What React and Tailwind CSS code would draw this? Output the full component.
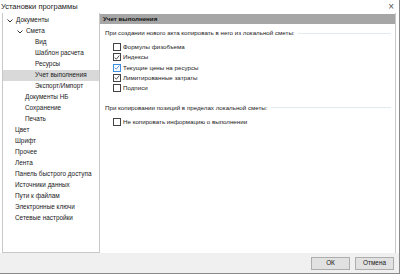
import React from 'react';

const tree = [
  { label: 'Документы', level: 0, chevron: true },
  { label: 'Смета', level: 1, chevron: true },
  { label: 'Вид', level: 2 },
  { label: 'Шаблон расчета', level: 2 },
  { label: 'Ресурсы', level: 2 },
  { label: 'Учет выполнения', level: 2, selected: true },
  { label: 'Экспорт/Импорт', level: 2 },
  { label: 'Документы НБ', level: 1 },
  { label: 'Сохранение', level: 1 },
  { label: 'Печать', level: 1 },
  { label: 'Цвет', level: 0 },
  { label: 'Шрифт', level: 0 },
  { label: 'Прочее', level: 0 },
  { label: 'Лента', level: 0 },
  { label: 'Панель быстрого доступа', level: 0 },
  { label: 'Источники данных', level: 0 },
  { label: 'Пути к файлам', level: 0 },
  { label: 'Электронные ключи', level: 0 },
  { label: 'Сетевые настройки', level: 0 },
];

const padFor = (it) => {
  if (it.chevron) return it.level === 0 ? 'pl-[4px]' : 'pl-[14px]';
  if (it.level === 0) return 'pl-[12px]';
  if (it.level === 1) return 'pl-[22px]';
  return 'pl-[32px]';
};

const Chevron = () => (
  <svg width="6" height="4" viewBox="0 0 6 4" className="mr-[3px]">
    <path d="M0.5 0.5 L3 3 L5.5 0.5" fill="none" stroke="#333" strokeWidth="1" />
  </svg>
);

const Check = ({ checked, blue }) => (
  <div className={`w-[8px] h-[8px] shrink-0 border flex items-center justify-center bg-white ${blue ? 'border-[#3c8ee0]' : 'border-[#444]'}`}>
    {checked && (
      <svg width="7" height="7" viewBox="0 0 7 7">
        <path d="M0.8 3.6 L2.7 5.4 L6.2 1.2" fill="none" stroke={blue ? '#2a7ad3' : '#222'} strokeWidth="0.9" />
      </svg>
    )}
  </div>
);

const Option = ({ label, checked, blue }) => (
  <div className="flex items-center h-[10.25px] gap-[2px] leading-none">
    <Check checked={checked} blue={blue} />
    <span>{label}</span>
  </div>
);

const GroupTitle = ({ children }) => (
  <div className="flex items-center gap-[3px] leading-none h-[9px]">
    <span className="whitespace-nowrap">{children}</span>
    <div className="flex-1 h-px bg-[#e3eaee]" />
  </div>
);

export default function App() {
  return (
    <div className="w-[400px] h-[274px] bg-[#f0f0f0] flex flex-col text-[6.2px] text-[#1a1a1a] overflow-hidden border-r border-b border-[#8a8a8a]" style={{ fontFamily: '"Liberation Sans", Arial, sans-serif' }}>
      {/* Title bar */}
      <div className="h-[13px] bg-white flex items-center justify-between pl-[1px] pr-[5px] shrink-0">
        <span className="text-[7.5px] text-[#222]">Установки программы</span>
        <span className="text-[10px] text-[#555] leading-none">×</span>
      </div>

      <div className="flex flex-1 min-h-0 bg-white">
        {/* Tree */}
        <div className="w-[98px] ml-[2px] mb-[20px] border border-[#c8c8c8] border-t-0 bg-white pt-[2px] text-[6.4px]">
          {tree.map((it) => (
            <div key={it.label} className={`h-[11px] flex items-center whitespace-nowrap leading-none ${it.selected ? 'bg-[#d9d9d9]' : ''} ${padFor(it)}`}>
              {it.chevron && <Chevron />}
              <span>{it.label}</span>
            </div>
          ))}
        </div>

        {/* Right panel */}
        <div className="flex-1 flex flex-col mr-[3px] border-r border-[#c8c8c8] mb-[20px]">
          <div className="h-[10px] bg-[#a6a6a6] flex items-center pl-[3px] font-bold text-[#111] mt-[1px] leading-none">Учет выполнения</div>
          <div className="pl-[5px] pr-[4px] pt-[5px] flex flex-col">
            <GroupTitle>При создании нового акта копировать в него из локальной сметы:</GroupTitle>
            <div className="pl-[8px] pt-[4px] flex flex-col">
              <Option label="Формулы физобъема" />
              <Option label="Индексы" checked />
              <Option label="Текущие цены на ресурсы" checked blue />
              <Option label="Лимитированные затраты" checked />
              <Option label="Подписи" />
            </div>
            <div className="mt-[10px]">
              <GroupTitle>При копировании позиций в пределах локальной сметы:</GroupTitle>
            </div>
            <div className="pl-[8px] pt-[5px]">
              <Option label="Не копировать информацию о выполнении" />
            </div>
          </div>
        </div>
      </div>

      {/* Footer */}
      <div className="h-[20px] shrink-0 flex items-center justify-end gap-[5px] pr-[5px] -mt-[20px] bg-[#f0f0f0]">
        <button className="w-[39px] h-[13px] bg-[#e1e1e1] border border-[#adadad] text-[6.4px] leading-none">ОК</button>
        <button className="w-[39px] h-[13px] bg-[#e1e1e1] border border-[#adadad] text-[6.4px] leading-none">Отмена</button>
      </div>
    </div>
  );
}
